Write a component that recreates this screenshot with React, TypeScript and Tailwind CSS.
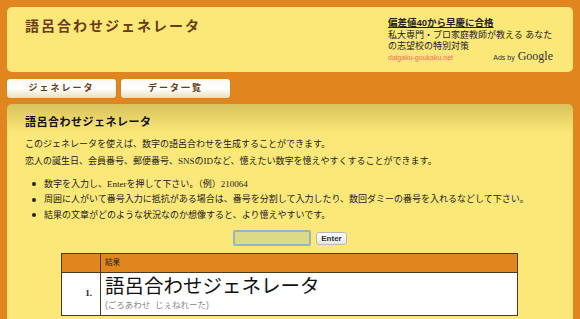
const serif = "font-['Liberation_Serif','Noto_Sans_CJK_JP',serif]"
const sans = "font-['Liberation_Sans','Noto_Sans_CJK_JP',sans-serif]"

const Tab = ({ label }: { label: string }) => (
  <div className="flex h-[19px] w-[109px] items-center justify-center rounded-[3px] bg-gradient-to-b from-[#fbf9ef] via-[#ffffff] to-[#e8dfb8] shadow-[0_0_1px_rgba(0,0,0,0.3)]">
    <span className={`${serif} text-[9px] font-bold tracking-[2px] text-[#6b3a12]`}>{label}</span>
  </div>
)

const App = () => {
  const tips = [
    '数字を入力し、Enterを押して下さい。（例）210064',
    '周囲に人がいて番号入力に抵抗がある場合は、番号を分割して入力したり、数回ダミーの番号を入れるなどして下さい。',
    '結果の文章がどのような状況なのか想像すると、より憶えやすいです。',
  ]

  return (
    <div className="h-[319px] w-[580px] overflow-hidden bg-[#e1861e] px-[7px] pt-[7px]">
      {/* Header */}
      <div className="flex h-[65px] rounded-[5px] bg-[#fbe878]">
        <div className="flex-1 pl-[18px] pt-[9px]">
          <h1 className={`${serif} text-[14px] font-bold tracking-[2px] text-[#6b3a12]`}>語呂合わせジェネレータ</h1>
        </div>
        <div className={`${sans} relative w-[185px] pt-[9px] text-[9px] leading-[11px] text-[#222]`}>
          <div className="text-[9.5px] font-bold leading-[13px] underline">偏差値40から早慶に合格</div>
          <div className="mt-[1px]">私大専門・プロ家庭教師が教える あなた</div>
          <div>の志望校の特別対策</div>
          <div className="inline-block bg-[#fce08a] text-[7px] leading-[9px] text-[#f07a3a]">daigaku-goukaku.net</div>
          <div className="absolute bottom-[9px] right-[20px] flex items-baseline gap-[3px] text-[#333]">
            <span className="text-[7px]">Ads by</span>
            <span className="font-['Liberation_Serif',serif] text-[12px]">Google</span>
          </div>
        </div>
      </div>

      {/* Tabs */}
      <div className="mt-[7px] flex gap-[5px]">
        <Tab label="ジェネレータ" />
        <Tab label="データ一覧" />
      </div>

      {/* Main */}
      <div className="mt-[6px] h-[240px] rounded-t-[5px] bg-gradient-to-b from-[#d8c25c] via-[#fbe878] via-[12%] to-[#fbe878] px-[18px] pt-[10px]">
        <h2 className={`${serif} text-[11px] font-bold tracking-[0.5px] text-[#111]`}>語呂合わせジェネレータ</h2>
        <div className={`${serif} mt-[5px] text-[9px] leading-[17px] text-[#222]`}>
          <p>このジェネレータを使えば、数字の語呂合わせを生成することができます。</p>
          <p>恋人の誕生日、会員番号、郵便番号、SNSのIDなど、憶えたい数字を憶えやすくすることができます。</p>
        </div>
        <ul className={`${serif} mt-[7px] text-[9px] leading-[15.5px] text-[#222]`}>
          {tips.map((t) => (
            <li key={t} className="flex items-center">
              <span className="ml-[7px] mr-[8px] h-[4px] w-[4px] rounded-full bg-[#222]" />
              {t}
            </li>
          ))}
        </ul>

        <div className="mt-[7px] flex items-center justify-center gap-[5px]">
          <input
            type="text"
            className="h-[16px] w-[78px] rounded-[2px] border-2 border-[#93b5c6] bg-[#dcd987] outline-none"
          />
          <button className={`${sans} h-[13px] rounded-[3px] border border-[#b8b8b8] bg-gradient-to-b from-white to-[#e6e6e6] px-[4px] text-[8px] font-bold leading-[11px] text-[#333]`}>
            Enter
          </button>
        </div>

        <table className={`${sans} ml-[36px] mt-[7px] w-[457px] border-collapse border border-[#4a3a22]`}>
          <thead>
            <tr className="h-[19px] bg-[#e1861e]">
              <th className="w-[39px] border-r border-[#4a3a22]" />
              <th className="pl-[4px] text-left text-[7.5px] font-normal text-[#222]">結果</th>
            </tr>
          </thead>
          <tbody>
            <tr className="h-[43px] border-t border-[#4a3a22] bg-white">
              <td className={`${serif} border-r border-[#4a3a22] pr-[8px] text-right text-[9px] font-bold text-[#222]`}>1.</td>
              <td className="pl-[4px] align-top">
                <div className="pt-[1px] text-[19.5px] leading-[24px] text-[#111]">語呂合わせジェネレータ</div>
                <div className="text-[8.5px] leading-[14px] text-[#888]">(ごろあわせ&nbsp;&nbsp;じぇねれーた)</div>
              </td>
            </tr>
          </tbody>
        </table>
      </div>
    </div>
  )
}

export default App
